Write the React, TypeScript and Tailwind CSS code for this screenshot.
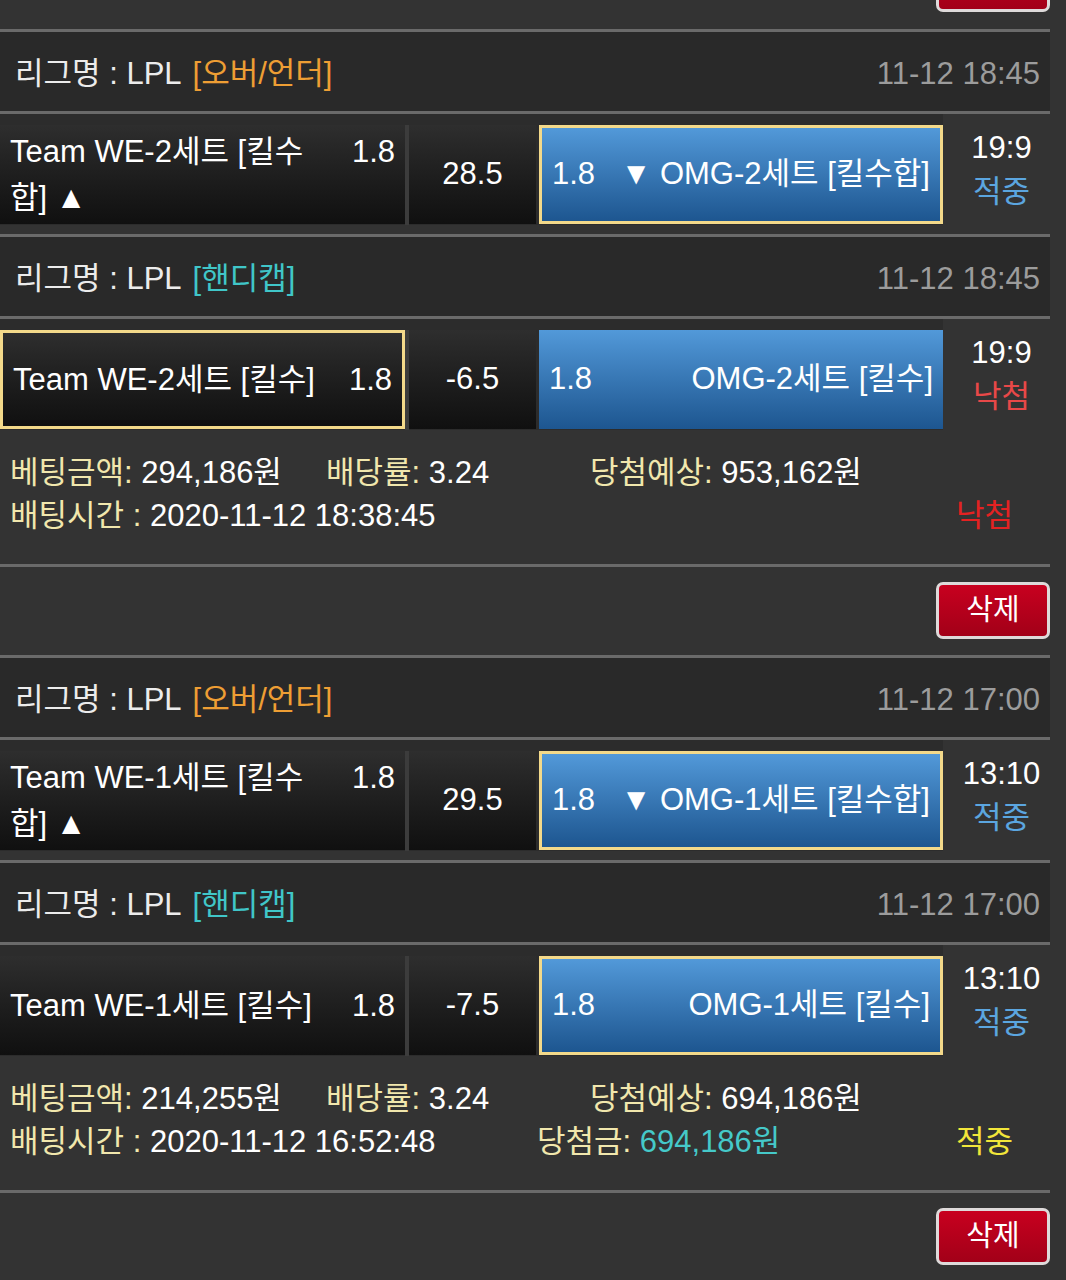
import React from "react";

interface RowData {
  left: string;
  leftOdds: string;
  leftSel?: boolean;
  mid: string;
  rightOdds: string;
  right: string;
  rightSel?: boolean;
  score: string;
  result: string;
  resultClass: string;
}

interface BetData {
  date: string;
  ou: RowData;
  hc: RowData;
  amount: string;
  expect: string;
  betTime: string;
  payout?: string;
  status: string;
  statusClass: string;
}

const bets: BetData[] = [
  {
    date: "11-12 18:45",
    ou: {
      left: "Team WE-2세트 [킬수합] ▲",
      leftOdds: "1.8",
      mid: "28.5",
      rightOdds: "1.8",
      right: "▼ OMG-2세트 [킬수합]",
      rightSel: true,
      score: "19:9",
      result: "적중",
      resultClass: "text-[#5ba6e0]",
    },
    hc: {
      left: "Team WE-2세트 [킬수]",
      leftOdds: "1.8",
      leftSel: true,
      mid: "-6.5",
      rightOdds: "1.8",
      right: "OMG-2세트 [킬수]",
      score: "19:9",
      result: "낙첨",
      resultClass: "text-[#e84848]",
    },
    amount: "294,186원",
    expect: "953,162원",
    betTime: "2020-11-12 18:38:45",
    status: "낙첨",
    statusClass: "text-[#e42222]",
  },
  {
    date: "11-12 17:00",
    ou: {
      left: "Team WE-1세트 [킬수합] ▲",
      leftOdds: "1.8",
      mid: "29.5",
      rightOdds: "1.8",
      right: "▼ OMG-1세트 [킬수합]",
      rightSel: true,
      score: "13:10",
      result: "적중",
      resultClass: "text-[#5ba6e0]",
    },
    hc: {
      left: "Team WE-1세트 [킬수]",
      leftOdds: "1.8",
      mid: "-7.5",
      rightOdds: "1.8",
      right: "OMG-1세트 [킬수]",
      rightSel: true,
      score: "13:10",
      result: "적중",
      resultClass: "text-[#5ba6e0]",
    },
    amount: "214,255원",
    expect: "694,186원",
    betTime: "2020-11-12 16:52:48",
    payout: "694,186원",
    status: "적중",
    statusClass: "text-[#f2e63a]",
  },
];

const Line = () => <div className="h-[3px] w-[1050px] bg-[#6a6a6a]" />;

const DeleteButton = () => (
  <button className="flex h-[57px] w-[114px] shrink-0 items-center justify-center rounded-[7px] border-[3px] border-[#dedada] bg-gradient-to-b from-[#c8001f] to-[#a20018] text-[29px] text-white">
    삭제
  </button>
);

const Header = ({ tag, tagClass, date }: { tag: string; tagClass: string; date: string }) => (
  <div className="flex h-[79px] w-[1050px] items-center justify-between bg-[#292929] pl-[15px] pr-[10px] pt-[6px]">
    <div className="text-[#ececec]">
      리그명 : LPL<span className={`ml-[11px] ${tagClass}`}>{tag}</span>
    </div>
    <div className="text-[#9c9c9c]">{date}</div>
  </div>
);

const Row = ({ row }: { row: RowData }) => (
  <div className="flex h-[111px] w-[1050px]">
    <div className="flex w-[943px] bg-[#2c2c2c] pt-[11px]">
      <div
        className={`flex h-[99px] w-[405px] items-center bg-gradient-to-b from-[#2e2e2e] to-[#101010] pl-[10px] pr-[10px] text-white ${
          row.leftSel ? "border-[3px] border-[#f3d98a]" : ""
        }`}
      >
        <div className="flex w-full items-start leading-[46px]">
          <span className="w-[318px]">{row.left}</span>
          <span className="flex-1 text-right">{row.leftOdds}</span>
        </div>
      </div>
      <div className="w-[4px] bg-[#3c3c3c]" />
      <div className="flex h-[99px] w-[127px] items-center justify-center bg-gradient-to-b from-[#2e2e2e] to-[#101010] text-white">
        {row.mid}
      </div>
      <div className="w-[3px]" />
      <div
        className={`flex h-[99px] w-[404px] items-center justify-between bg-gradient-to-b from-[#5299d9] to-[#1d5690] pl-[10px] pr-[10px] text-white ${
          row.rightSel ? "border-[3px] border-[#f3d98a]" : ""
        }`}
      >
        <span>{row.rightOdds}</span>
        <span>{row.right}</span>
      </div>
    </div>
    <div className="flex w-[107px] flex-col items-center justify-center pl-[10px] leading-[44px]">
      <span className="text-white">{row.score}</span>
      <span className={row.resultClass}>{row.result}</span>
    </div>
  </div>
);

const Bet = ({ bet }: { bet: BetData }) => (
  <div>
    <Line />
    <Header tag="[오버/언더]" tagClass="text-[#ee9e34]" date={bet.date} />
    <Line />
    <Row row={bet.ou} />
    <div className="h-[9px]" />
    <Line />
    <Header tag="[핸디캡]" tagClass="text-[#40c6c8]" date={bet.date} />
    <Line />
    <Row row={bet.hc} />
    <div className="w-[1050px] pb-[27px] pl-[10px] pr-[37px] pt-[21px] leading-[43px]">
      <div className="flex">
        <span className="w-[316px]">
          <span className="text-[#f1e7ad]">베팅금액: </span>
          <span className="text-white">{bet.amount}</span>
        </span>
        <span className="w-[264px]">
          <span className="text-[#f1e7ad]">배당률: </span>
          <span className="text-white">3.24</span>
        </span>
        <span>
          <span className="text-[#f1e7ad]">당첨예상: </span>
          <span className="text-white">{bet.expect}</span>
        </span>
      </div>
      <div className="flex">
        <span className="w-[527px]">
          <span className="text-[#f1e7ad]">배팅시간 : </span>
          <span className="text-white">{bet.betTime}</span>
        </span>
        <span className="flex-1">
          {bet.payout && (
            <>
              <span className="text-[#f1e7ad]">당첨금: </span>
              <span className="text-[#45c9c9]">{bet.payout}</span>
            </>
          )}
        </span>
        <span className={bet.statusClass}>{bet.status}</span>
      </div>
    </div>
    <Line />
    <div className="flex w-[1050px] justify-end pb-[16px] pt-[15px]">
      <DeleteButton />
    </div>
  </div>
);

const App = () => {
  return (
    <div className="h-[1280px] w-[1066px] overflow-hidden bg-[#333333] font-[family-name:'Liberation_Sans','Noto_Sans_CJK_KR',sans-serif] text-[31px]">
      {/* tail of the previous bet, only the button's bottom shows */}
      <div className="flex h-[29px] w-[1050px] items-end justify-end overflow-hidden pb-[17px]">
        <DeleteButton />
      </div>
      {bets.map((bet, i) => (
        <Bet key={i} bet={bet} />
      ))}
    </div>
  );
};

export default App;
